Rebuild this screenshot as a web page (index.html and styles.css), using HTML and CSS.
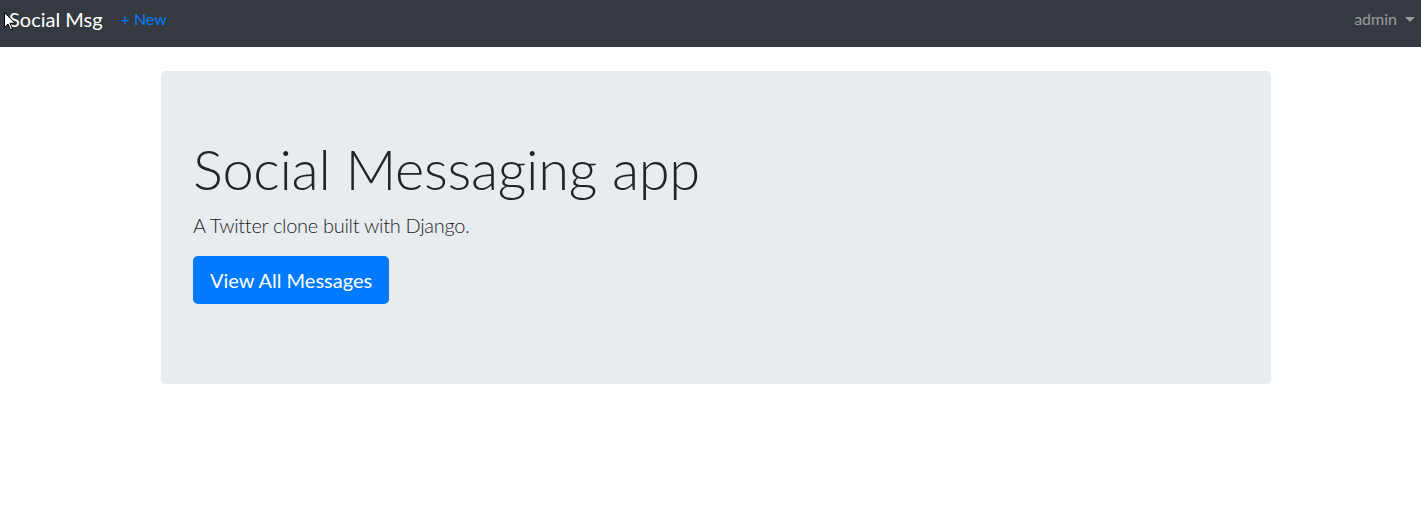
FILE: index.html
```html
<!DOCTYPE html>
<html lang="en">
<head>
<meta charset="utf-8">
<title>Social Msg</title>
<link rel="stylesheet" href="styles.css">
</head>
<body>
<nav class="navbar">
  <a class="brand" href="#">Social Msg</a>
  <a class="nav-link new" href="#">+ New</a>
  <div class="spacer"></div>
  <a class="nav-link user" href="#">admin <span class="caret"></span></a>
</nav>
<main class="container">
  <section class="jumbotron">
    <h1 class="display">Social Messaging app</h1>
    <p class="lead">A Twitter clone built with Django.</p>
    <p class="actions"><a class="btn" href="#">View All Messages</a></p>
  </section>
</main>
<svg class="cursor" width="12" height="19" viewBox="0 0 12 19"><path d="M0.5 0.5 L0.5 15.5 L4 12 L6.5 18 L8.5 17 L6 11.3 L11 11.3 Z" fill="#fff" stroke="#000" stroke-width="1"/></svg>
</body>
</html>
```
FILE: styles.css
```css
* { box-sizing: border-box; }
body {
  margin: 0;
  font-family: Lato, "Open Sans", sans-serif;
  font-size: 16px;
  line-height: 1.5;
  color: #212529;
  background: #fff;
}
a { text-decoration: none; }
.navbar {
  display: flex;
  align-items: flex-start;
  height: 47px;
  padding: 4px 6px 0 9px;
  background: #343a40;
}
.brand {
  font-size: 20px;
  line-height: 30px;
  color: #fff;
  margin-right: 18px;
}
.nav-link {
  font-size: 16px;
  line-height: 24px;
  padding-top: 3px;
}
.new { color: #007bff; }
.spacer { flex: 1; }
.user {
  color: rgba(255,255,255,.5);
  display: flex;
  align-items: center;
}
.caret {
  display: inline-block;
  margin-left: 8px;
  border-top: 5px solid rgba(255,255,255,.5);
  border-left: 5px solid transparent;
  border-right: 5px solid transparent;
}
.container {
  width: 1110px;
  margin: 24px 0 0 161px;
}
.jumbotron {
  background: #e9ecef;
  border-radius: 5px;
  padding: 64px 32px;
}
.display {
  margin: 0 0 8px;
  font-size: 56px;
  font-weight: 300;
  line-height: 67px;
  letter-spacing: -0.3px;
}
.lead {
  margin: 0 0 16px;
  font-size: 20px;
  font-weight: 300;
  line-height: 30px;
  letter-spacing: -0.3px;
}
.actions { margin: 0 0 16px; }
.btn {
  display: inline-block;
  background: #007bff;
  color: #fff;
  font-size: 20px;
  line-height: 30px;
  padding: 9px 17px;
  border-radius: 5px;
}
.cursor {
  position: absolute;
  left: 4px;
  top: 12px;
}
```
